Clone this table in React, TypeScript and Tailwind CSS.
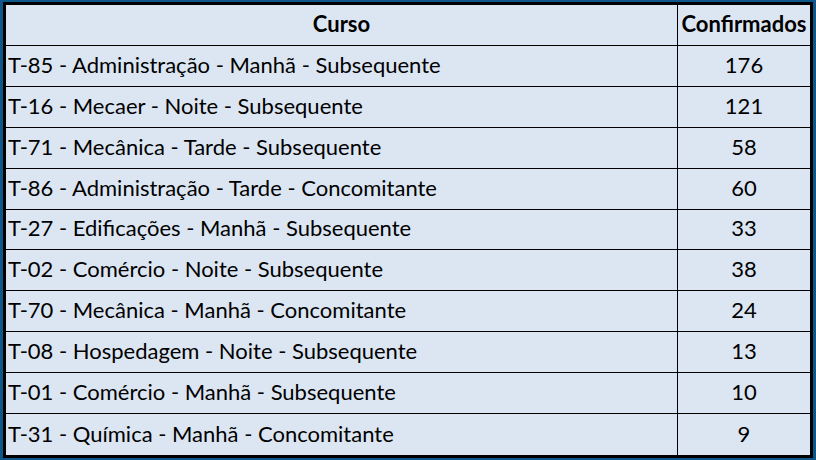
import React from "react";

const rows: [string, string][] = [
  ["T-85 - Administração - Manhã - Subsequente", "176"],
  ["T-16 - Mecaer - Noite - Subsequente", "121"],
  ["T-71 - Mecânica - Tarde - Subsequente", "58"],
  ["T-86 - Administração - Tarde - Concomitante", "60"],
  ["T-27 - Edificações - Manhã - Subsequente", "33"],
  ["T-02 - Comércio - Noite - Subsequente", "38"],
  ["T-70 - Mecânica - Manhã - Concomitante", "24"],
  ["T-08 - Hospedagem - Noite - Subsequente", "13"],
  ["T-01 - Comércio - Manhã - Subsequente", "10"],
  ["T-31 - Química - Manhã - Concomitante", "9"],
];

export default function App() {
  return (
    <div className="w-[816px] h-[460px] bg-[#0f5788] pt-[2px] pl-[3px] pr-[3px] pb-[2px]">
      <div
        className="w-full h-full border-[3px] border-black bg-[#dce6f2] text-black text-[22px] flex flex-col"
        style={{ fontFamily: "Lato, 'Open Sans', sans-serif" }}
      >
        <div className="flex h-[41px] border-b border-black">
          <div className="w-[672px] border-r border-black flex items-center justify-center font-bold pb-[3px]">Curso</div>
          <div className="flex-1 flex items-center justify-center font-bold pb-[3px]">Confirmados</div>
        </div>
        {rows.map(([c, n], i) => (
          <div key={i} className={`flex h-[41px] ${i < rows.length - 1 ? "border-b border-black" : ""}`}>
            <div className="w-[672px] border-r border-black flex items-center pl-[2px] pb-[3px] whitespace-nowrap">{c}</div>
            <div className="flex-1 flex items-center justify-center pb-[3px]">{n}</div>
          </div>
        ))}
      </div>
    </div>
  );
}
